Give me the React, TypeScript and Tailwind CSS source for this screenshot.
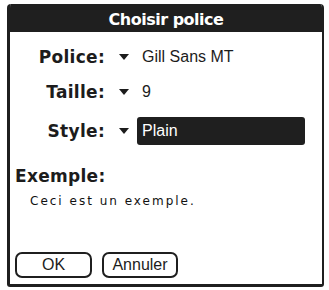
import React from 'react';

const bold = { fontFamily: '"DejaVu Sans", Verdana, sans-serif' };
const plain = { fontFamily: '"Liberation Sans", Arial, sans-serif' };

function Arrow() {
  return (
    <svg width="10" height="6" viewBox="0 0 10 6" className="shrink-0">
      <path d="M0 0 H10 L5 6 Z" fill="#1c1c1c" />
    </svg>
  );
}

function Row({ label, value, selected, className }: {
  label: string;
  value: string;
  selected?: boolean;
  className?: string;
}) {
  return (
    <div className={`flex items-center h-[28px] ${className ?? ''}`}>
      <span
        style={bold}
        className="w-[95px] text-right text-[17px] font-bold tracking-[0.3px] text-[#1c1c1c] leading-[28px]"
      >
        {label}
      </span>
      <span className="ml-[14px]">
        <Arrow />
      </span>
      <span
        style={plain}
        className={`ml-[8px] h-[28px] flex items-center px-[5px] text-[16px] ${
          selected ? 'w-[168px] bg-[#1f1f1f] text-white rounded-[3px]' : 'text-[#1c1c1c]'
        }`}
      >
        {value}
      </span>
    </div>
  );
}

export default function App() {
  return (
    <div className="w-[329px] h-[290px] bg-white pt-[4px] pl-[7px]">
      <div className="w-[317px] h-[283px] flex flex-col overflow-hidden border-[#1f1f1f] border-l-[3px] border-r-[2px] border-b-[3px] rounded-t-[4px] rounded-b-[3px]">
        {/* Title bar */}
        <div className="h-[28px] bg-[#1f1f1f] flex items-center justify-center pt-[3px]">
          <span style={bold} className="text-white text-[16px] font-bold tracking-[-0.5px]">
            Choisir police
          </span>
        </div>

        {/* Body */}
        <div className="flex-1 flex flex-col bg-white">
          <Row label="Police:" value="Gill Sans MT" className="mt-[11px]" />
          <Row label="Taille:" value="9" className="mt-[7px]" />
          <Row label="Style:" value="Plain" selected className="mt-[11px]" />

          <div
            style={bold}
            className="mt-[20px] pl-[5px] text-[17px] font-bold leading-[22px] tracking-[0.3px] text-[#1c1c1c]"
          >
            Exemple:
          </div>
          <div
            style={bold}
            className="mt-[7px] pl-[20px] text-[12px] leading-[15px] tracking-[2px] text-[#111]"
          >
            Ceci est un exemple.
          </div>

          <div className="mt-auto pb-[6px] pl-[5px] flex gap-[10px]">
            <button
              style={plain}
              className="w-[77px] h-[26px] border-2 border-[#1f1f1f] rounded-[7px] text-[16px] text-[#1c1c1c] flex items-center justify-center"
            >
              OK
            </button>
            <button
              style={plain}
              className="w-[76px] h-[26px] border-2 border-[#1f1f1f] rounded-[7px] text-[16px] text-[#1c1c1c] flex items-center justify-center"
            >
              Annuler
            </button>
          </div>
        </div>
      </div>
    </div>
  );
}
